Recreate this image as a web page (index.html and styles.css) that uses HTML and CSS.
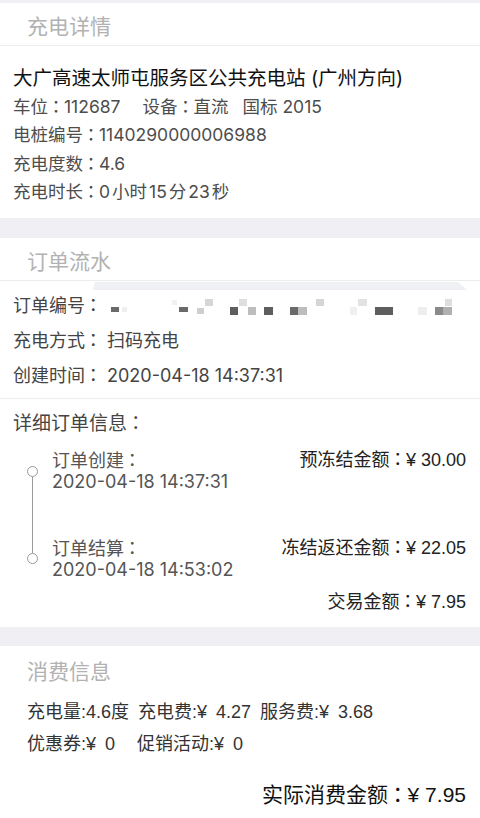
FILE: index.html
```html
<!DOCTYPE html>
<html lang="zh-CN">
<head>
<meta charset="utf-8">
<title>充电详情</title>
<link rel="stylesheet" href="styles.css">
</head>
<body>
<div class="band band-top"></div>

<section class="card">
  <div class="card-head bordered">充电详情</div>
  <div class="station">
    <div class="station-name">大广高速太师屯服务区公共充电站 (广州方向)</div>
    <div class="info-line">车位<span class="colon" lang="zh-TW">：</span>112687<span class="gap-l">设备<span class="colon" lang="zh-TW">：</span>直流</span><span class="gap-m">国标 2015</span></div>
    <div class="info-line">电桩编号<span class="colon" lang="zh-TW">：</span>1140290000006988</div>
    <div class="info-line">充电度数<span class="colon" lang="zh-TW">：</span>4.6</div>
    <div class="info-line">充电时长<span class="colon" lang="zh-TW">：</span>0<span class="unit">小时</span>15<span class="unit">分</span>23<span class="unit">秒</span></div>
  </div>
</section>

<div class="band band-mid"></div>

<section class="card">
  <div class="card-head bordered">订单流水</div>
  <div class="order-rows bordered">
    <svg class="mosaic" viewBox="0 281 480 40" width="480" height="40" aria-hidden="true">
      <polygon points="95,282 458,282 467,290 93,290" fill="#eef0f4"/>
      <rect x="111" y="307" width="8" height="5" fill="#6a6a6a"/>
      <rect x="122" y="307" width="5" height="5" fill="#eeeeee"/>
      <rect x="172" y="300" width="5" height="5" fill="#f0f0f0"/>
      <rect x="179" y="307" width="9" height="5" fill="#6a6a6a"/>
      <rect x="197" y="308" width="7" height="6" fill="#cfcfcf"/>
      <rect x="205" y="299" width="8" height="7" fill="#d6d6d6"/>
      <rect x="230" y="307" width="8" height="8" fill="#5e5e5e"/>
      <rect x="239" y="299" width="8" height="7" fill="#dedede"/>
      <rect x="248" y="307" width="8" height="8" fill="#bdbdbd"/>
      <rect x="264" y="307" width="9" height="8" fill="#5e5e5e"/>
      <rect x="290" y="307" width="8" height="8" fill="#6a6a6a"/>
      <rect x="298" y="307" width="9" height="8" fill="#bdbdbd"/>
      <rect x="316" y="299" width="8" height="7" fill="#d6d6d6"/>
      <rect x="350" y="307" width="7" height="8" fill="#f0f0f0"/>
      <rect x="358" y="299" width="9" height="7" fill="#e2e2e2"/>
      <rect x="375" y="307" width="18" height="8" fill="#5e5e5e"/>
      <rect x="418" y="307" width="9" height="8" fill="#eeeeee"/>
      <rect x="435" y="307" width="8" height="8" fill="#8a8a8a"/>
      <rect x="443" y="307" width="9" height="8" fill="#b0b0b0"/>
      <rect x="445" y="299" width="7" height="7" fill="#dedede"/>
    </svg>
    <div class="order-row"><span class="label">订单编号<span class="colon" lang="zh-TW">：</span></span></div>
    <div class="order-row"><span class="label">充电方式<span class="colon" lang="zh-TW">：</span></span><span class="value">扫码充电</span></div>
    <div class="order-row"><span class="label">创建时间<span class="colon" lang="zh-TW">：</span></span><span class="value">2020-04-18 14:37:31</span></div>
  </div>
  <div class="detail">
    <div class="detail-title">详细订单信息<span class="colon" lang="zh-TW">：</span></div>
    <div class="timeline">
      <div class="rail"><span class="dot"></span><span class="line"></span><span class="dot"></span></div>
      <div class="step">订单创建<span class="colon" lang="zh-TW">：</span><br>2020-04-18 14:37:31</div>
      <div class="amount">预冻结金额<span class="colon" lang="zh-TW">：</span>¥ 30.00</div>
      <div class="step">订单结算<span class="colon" lang="zh-TW">：</span><br>2020-04-18 14:53:02</div>
      <div class="amount">冻结返还金额<span class="colon" lang="zh-TW">：</span>¥ 22.05</div>
    </div>
    <div class="trade">交易金额<span class="colon" lang="zh-TW">：</span>¥ 7.95</div>
  </div>
</section>

<div class="band"></div>

<section class="card">
  <div class="card-head plain">消费信息</div>
  <div class="fee-line">充电量:4.6度 充电费:¥ 4.27 服务费:¥ 3.68</div>
  <div class="fee-line">优惠券:¥ 0<span class="gap-s">促销活动:¥ 0</span></div>
  <div class="total">实际消费金额<span class="colon" lang="zh-TW">：</span>¥ 7.95</div>
</section>
</body>
</html>
```

FILE: styles.css
```css
* {
  box-sizing: border-box;
}

html, body {
  margin: 0;
  padding: 0;
  background: #ffffff;
}

body {
  width: 480px;
  font-family: Inter, "Noto Sans CJK SC", sans-serif;
  color: #333333;
}

.colon {
  font-family: "Noto Sans CJK TC", "Noto Sans CJK JP", sans-serif;
  line-height: 0;
  margin: 0 -0.75px;
}

.unit {
  margin: 0 2px;
}

.band {
  height: 19px;
  background: #efeff4;
}

.band-top {
  height: 3px;
}

.band-mid {
  height: 20px;
}

.card {
  background: #ffffff;
}

.bordered {
  border-bottom: 1px solid #ececec;
}

.card-head {
  padding: 5px 0 0 27px;
  height: 43px;
  line-height: 37px;
  font-size: 21px;
  color: #b2b2b2;
}

.card-head.plain {
  padding-top: 1px;
  height: 50px;
  line-height: 49px;
}

.station {
  padding: 18px 13px 11.5px;
}

.station-name {
  font-size: 19.5px;
  line-height: 28.5px;
  color: #111111;
  white-space: nowrap;
}

.info-line {
  font-size: 17.5px;
  line-height: 28.5px;
  color: #4d4d4d;
  white-space: nowrap;
}

.gap-l {
  margin-left: 22px;
}

.gap-m {
  margin-left: 14px;
}

.order-rows {
  position: relative;
  padding: 6.5px 13px 5.5px;
}

.mosaic {
  position: absolute;
  top: 0;
  left: 0;
  display: block;
}

.order-row {
  position: relative;
  display: flex;
  font-size: 18px;
  line-height: 35px;
  color: #444444;
}

.order-row .label {
  width: 94px;
}

.detail {
  padding: 10px 14px 14px 13px;
}

.detail-title {
  font-size: 19px;
  line-height: 30px;
  color: #444444;
}

.timeline {
  margin-top: 10.5px;
  display: grid;
  grid-template-columns: 39px 1fr auto;
  row-gap: 46px;
}

.rail {
  grid-column: 1;
  grid-row: 1 / span 2;
  display: flex;
  flex-direction: column;
  align-items: center;
  padding: 16px 0;
}

.dot {
  width: 11px;
  height: 11px;
  border: 1.5px solid #999999;
  border-radius: 50%;
  background: #ffffff;
  flex: none;
}

.line {
  flex: 1;
  width: 1.5px;
  background: #999999;
}

.step {
  grid-column: 2;
  font-size: 18px;
  line-height: 21px;
  color: #555555;
}

.amount {
  grid-column: 3;
  font-family: "Liberation Sans", "Noto Sans CJK SC", sans-serif;
  font-size: 18px;
  line-height: 21px;
  color: #222222;
  text-align: right;
  white-space: nowrap;
}

.trade {
  margin-top: 11.5px;
  font-family: "Liberation Sans", "Noto Sans CJK SC", sans-serif;
  font-size: 18px;
  line-height: 22px;
  color: #222222;
  text-align: right;
}

.fee-line {
  padding-left: 27px;
  font-family: "Liberation Sans", "Noto Sans CJK SC", sans-serif;
  font-size: 18px;
  line-height: 32px;
  word-spacing: 4px;
  color: #333333;
  white-space: nowrap;
}

.gap-s {
  margin-left: 22px;
}

.total {
  margin-top: 20px;
  padding-right: 14px;
  font-family: "Liberation Sans", "Noto Sans CJK SC", sans-serif;
  font-size: 21px;
  line-height: 30px;
  color: #111111;
  text-align: right;
}
```
